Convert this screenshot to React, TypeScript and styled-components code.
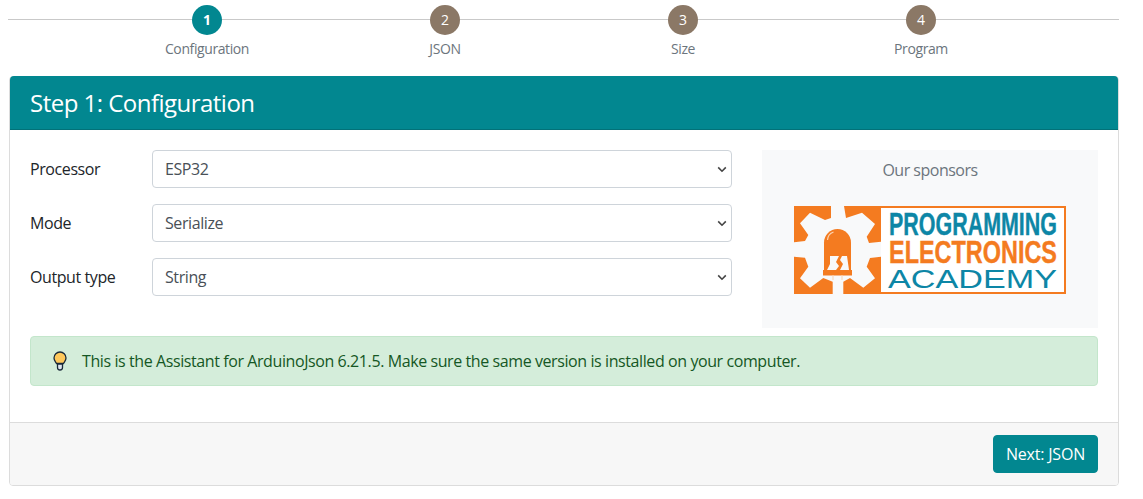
import React from "react";
import styled, { createGlobalStyle } from "styled-components";

const Global = createGlobalStyle`
  html, body { margin: 0; padding: 0; background: #fff; }
  body { font-family: "Open Sans", "Noto Sans", sans-serif; font-size: 16px; line-height: 24px; color: #212529; letter-spacing: -0.41px; }
`;

const Page = styled.div`
  width: 1110px;
  padding: 5px 0 0 9px;
`;

const Stepper = styled.ol`
  position: relative;
  list-style: none;
  margin: 0 0 16px -1px;
  padding: 0 79px 0 80px;
  width: 952px;
  box-sizing: content-box;
  display: flex;
  &::before {
    content: "";
    position: absolute;
    left: 0;
    top: 14px;
    width: 1111px;
    height: 1px;
    background: #c9c9c9;
  }
`;

const Step = styled.li`
  position: relative;
  flex: 0 0 238px;
  display: flex;
  flex-direction: column;
  align-items: center;
`;

const Bullet = styled.span<{ $active?: boolean }>`
  width: 30px;
  height: 30px;
  border-radius: 50%;
  background: ${(p) => (p.$active ? "#028790" : "#8b7866")};
  color: #fff;
  font-size: 14px;
  font-weight: ${(p) => (p.$active ? 700 : 400)};
  letter-spacing: 0;
  line-height: 30px;
  text-align: center;
`;

const StepLabel = styled.span`
  margin-top: 3px;
  font-size: 14px;
  line-height: 22px;
  color: #6c757d;
  letter-spacing: -0.4px;
`;

const Card = styled.section`
  border: 1px solid #dcdcdc;
  border-radius: 4px;
`;

const CardHeader = styled.header`
  height: 54px;
  box-sizing: border-box;
  margin: -1px 0 0;
  padding: 0 20px;
  background: #028790;
  border-bottom: 1px solid #027178;
  display: flex;
  align-items: center;
  border-radius: 4px 4px 0 0;
`;

const Title = styled.h2`
  margin: 0;
  font-size: 24px;
  font-weight: 400;
  line-height: 29px;
  color: #fff;
  letter-spacing: -0.52px;
`;

const CardBody = styled.div`
  padding: 20px 20px 36px;
`;

const Columns = styled.div`
  display: flex;
  gap: 30px;
  margin-bottom: 8px;
`;

const FormColumn = styled.form`
  flex: 0 0 702px;
  display: flex;
  flex-direction: column;
  gap: 16px;
`;

const FormRow = styled.div`
  display: flex;
  align-items: center;
`;

const Label = styled.label`
  flex: 0 0 122px;
`;

const Select = styled.select`
  flex: 1;
  height: 38px;
  appearance: none;
  box-sizing: border-box;
  border: 1px solid #ced4da;
  border-radius: 4px;
  padding: 0 28px 0 12px;
  font: inherit;
  letter-spacing: inherit;
  color: #495057;
  background: #fff url("data:image/svg+xml,%3Csvg xmlns='http://www.w3.org/2000/svg' width='10' height='7' viewBox='0 0 10 7'%3E%3Cpath d='M1.2 1.4 5 5.2l3.8-3.8' fill='none' stroke='%23444' stroke-width='1.6'/%3E%3C/svg%3E") no-repeat right 4px center;
`;

const Sponsors = styled.aside`
  flex: 0 0 336px;
  height: 178px;
  background: #f8f9fa;
  display: flex;
  flex-direction: column;
  align-items: center;
  color: #6c757d;
  font-size: 16px;
  letter-spacing: -0.5px;
  padding-top: 8px;
  box-sizing: border-box;
`;

const SponsorLogo = styled.svg`
  display: block;
  margin-top: 24px;
`;

const Alert = styled.div`
  height: 50px;
  box-sizing: border-box;
  display: flex;
  align-items: center;
  gap: 15px;
  padding: 0 21px 0 22px;
  background: #d4edda;
  border: 1px solid #c3e6cb;
  border-radius: 4px;
  color: #155724;
`;

const CardFooter = styled.footer`
  height: 63px;
  box-sizing: border-box;
  background: #f7f7f7;
  border-top: 1px solid #dcdcdc;
  border-radius: 0 0 3px 3px;
  padding: 12px 20px;
  display: flex;
  justify-content: flex-end;
`;

const NextButton = styled.button`
  width: 105px;
  height: 38px;
  border: 1px solid #028790;
  border-radius: 4px;
  background: #028790;
  color: #fff;
  font: inherit;
  letter-spacing: -0.2px;
  padding: 0;
`;

const Logo = () => (
  <SponsorLogo width="272" height="88" viewBox="0 0 272 88">
    <rect width="272" height="88" fill="#f47b20" />
    <rect x="87" y="2" width="183" height="84" fill="#fff" />
    <polygon
      fill="#f8f9fa"
      points="37,0 50,0 52,12 68,6.7 81,18 72.7,30.7 75,37 87,35.7 87,50.7 76,52 72.7,60.7 81,72.3 69.3,81.7 56,72 49.3,75.7 49.3,88 38.7,88 38.7,75.7 29.3,72 16,81.7 6,72.3 14.3,60.7 11,51.7 0,50.7 0,36.3 11,35 14.3,29 6,17.3 16,6.7 31,14 37,12"
    />
    <path d="M30 64V36.500a13.500 13.500 0 0 1 27 0V64z" fill="#f47b20" />
    <rect x="29" y="64" width="29" height="5.500" fill="#f47b20" />
    <path d="M33.500 34a9 9 0 0 1 6-8" fill="none" stroke="#fbd3b2" strokeWidth="1.200" />
    <polygon points="36,50 45,50 42,56 45,60 42,64 33,64 36,58" fill="#f8f9fa" />
    <polygon points="48,50 53,50 55,64 46,64 49,58 46,54" fill="#f8f9fa" />
    <path d="M39 69v5M48 69v5" stroke="#fbd3b2" strokeWidth="1" />
    <text x="95" y="29" fontFamily="'Liberation Sans', sans-serif" fontWeight="700" fontSize="31" letterSpacing="0" fill="#0d86a6" stroke="#0d86a6" strokeWidth="0.4" textLength="168" lengthAdjust="spacingAndGlyphs">PROGRAMMING</text>
    <text x="95" y="57" fontFamily="'Liberation Sans', sans-serif" fontWeight="700" fontSize="31" letterSpacing="0" fill="#f47b20" stroke="#f47b20" strokeWidth="0.4" textLength="168" lengthAdjust="spacingAndGlyphs">ELECTRONICS</text>
    <text x="94" y="82" fontFamily="'Liberation Sans', sans-serif" fontWeight="400" fontSize="26" letterSpacing="0" fill="#0d86a6" textLength="169" lengthAdjust="spacingAndGlyphs">ACADEMY</text>
  </SponsorLogo>
);

const Bulb = () => (
  <svg width="14" height="20" viewBox="0 0 14 20" style={{ flex: "none" }}>
    <path d="M7 1a6 6 0 0 0-6 6c0 2.500 1.500 3.500 2.500 5.500h7C11.500 10.500 13 9.500 13 7a6 6 0 0 0-6-6z" fill="#ffc85c" stroke="#1b2a3a" strokeWidth="1.300" />
    <path d="M4.500 13h5v3.500a2.500 2.500 0 0 1-5 0z" fill="#dfe6f0" stroke="#1b2a3a" strokeWidth="1.300" />
  </svg>
);

const steps = ["Configuration", "JSON", "Size", "Program"];
const fields = [
  ["Processor", "ESP32"],
  ["Mode", "Serialize"],
  ["Output type", "String"],
];

export default function App() {
  return (
    <Page>
      <Global />
      <Stepper>
        {steps.map((s, i) => (
          <Step key={s}>
            <Bullet $active={i === 0}>{i + 1}</Bullet>
            <StepLabel>{s}</StepLabel>
          </Step>
        ))}
      </Stepper>
      <Card>
        <CardHeader>
          <Title>Step 1: Configuration</Title>
        </CardHeader>
        <CardBody>
          <Columns>
            <FormColumn>
              {fields.map(([l, v]) => (
                <FormRow key={l}>
                  <Label>{l}</Label>
                  <Select defaultValue={v} aria-label={l}>
                    <option>{v}</option>
                  </Select>
                </FormRow>
              ))}
            </FormColumn>
            <Sponsors>
              Our sponsors
              <Logo />
            </Sponsors>
          </Columns>
          <Alert>
            <Bulb />
            <span>This is the Assistant for ArduinoJson 6.21.5. Make sure the same version is installed on your computer.</span>
          </Alert>
        </CardBody>
        <CardFooter>
          <NextButton>Next: JSON</NextButton>
        </CardFooter>
      </Card>
    </Page>
  );
}
